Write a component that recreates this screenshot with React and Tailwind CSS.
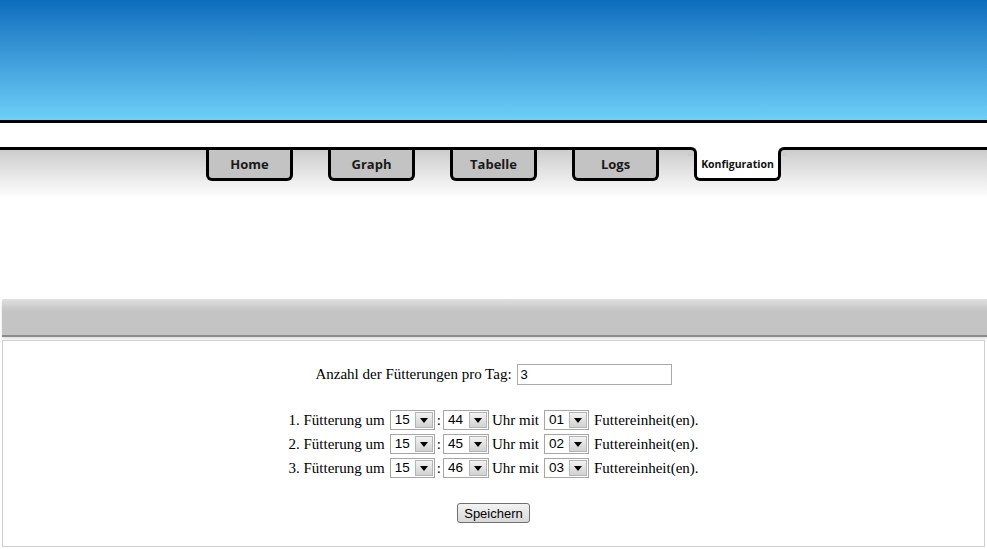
import React from "react";

const tabs = ["Home", "Graph", "Tabelle", "Logs", "Konfiguration"];

function Tab({ label, active }) {
  if (active) {
    return (
      <div className="relative -mt-[3px] flex h-[34px] w-[87px] items-center justify-center rounded-b-[6px] border-x-[3px] border-b-[3px] border-black bg-white pt-[4px]">
        <div className="absolute -left-[9px] top-0 h-[9px] w-[9px] bg-white">
          <div className="h-full w-full rounded-tr-[6px] border-r-[3px] border-t-[3px] border-black bg-[#cdcdcd]" />
        </div>
        <div className="absolute -right-[9px] top-0 h-[9px] w-[9px] bg-white">
          <div className="h-full w-full rounded-tl-[6px] border-l-[3px] border-t-[3px] border-black bg-[#cdcdcd]" />
        </div>
        <span className="text-[10.5px] font-bold text-[#111]" style={{ fontFamily: '"Open Sans", sans-serif' }}>
          {label}
        </span>
      </div>
    );
  }
  return (
    <div className="flex h-[31px] w-[87px] items-center justify-center rounded-b-[6px] border-x-[3px] border-b-[3px] border-black bg-[#c3c3c3] pt-[1px]">
      <span className="text-[13px] font-bold text-[#1a1a1a]" style={{ fontFamily: '"Open Sans", sans-serif' }}>
        {label}
      </span>
    </div>
  );
}

function Select({ value, w }) {
  return (
    <span className={`inline-flex h-[20px] ${w} items-center justify-between border border-[#a6a6a6] bg-white pl-[4px] pr-[1px]`}>
      <span className="text-[13.5px] leading-none text-black" style={{ fontFamily: '"Liberation Sans", Arial, sans-serif' }}>
        {value}
      </span>
      <span className="flex h-[16px] w-[18px] items-center justify-center border border-[#b5b5b5] bg-gradient-to-b from-[#f2f2f2] to-[#d2d2d2]">
        <svg width="8" height="5" viewBox="0 0 8 5">
          <path d="M0 0H8L4 5Z" fill="#000" />
        </svg>
      </span>
    </span>
  );
}

const serif = { fontFamily: '"Liberation Serif", "Times New Roman", serif' };

function Row({ n, h, m, u }) {
  return (
    <div className="flex h-[24px] items-center justify-center text-[15px] leading-[24px] text-black" style={serif}>
      <span className="mr-[5px]">{n}. Fütterung um</span>
      <Select value={h} w="w-[45px]" />
      <span className="mx-[2px]">:</span>
      <Select value={m} w="w-[46px]" />
      <span className="ml-[3px] mr-[5px]">Uhr mit</span>
      <Select value={u} w="w-[45px]" />
      <span className="ml-[5px]">Futtereinheit(en).</span>
    </div>
  );
}

export default function App() {
  return (
    <div className="min-h-[549px] w-[987px] overflow-hidden bg-white">
      <div className="h-[120px] bg-gradient-to-b from-[#0a6dbc] to-[#6dd0f7]" />
      <div className="h-[3px] bg-black" />
      <div className="h-[24px] bg-white" />
      <div className="h-[152px] border-t-[3px] border-black bg-[linear-gradient(#cdcdcd,#ffffff_48px)]">
        <div className="ml-[206px] flex items-start gap-[35px]">
          {tabs.map((t) => (
            <Tab key={t} label={t} active={t === "Konfiguration"} />
          ))}
        </div>
      </div>
      <div className="ml-[2px] h-[38px] rounded-tl-[2px] border-b-[2px] border-[#8b8b8b] bg-[linear-gradient(#e0e0e0,#c4c4c4_12px)] shadow-[0_2px_3px_rgba(0,0,0,0.12)]" />
      <div className="mx-[2px] mt-[3px] h-[207px] border border-[#cfcfcf] bg-white">
        <div className="mt-[23px] flex h-[21px] items-center justify-center text-[15px] text-black" style={serif}>
          <span className="mr-[5px]">Anzahl der Fütterungen pro Tag:</span>
          <span className="flex h-[21px] w-[155px] items-center border border-[#a9a9a9] px-[3px] text-[13px]" style={{ fontFamily: '"Liberation Sans", Arial, sans-serif' }}>
            3
          </span>
        </div>
        <div className="mt-[23px] flex flex-col">
          <Row n={1} h="15" m="44" u="01" />
          <Row n={2} h="15" m="45" u="02" />
          <Row n={3} h="15" m="46" u="03" />
        </div>
        <div className="mt-[23px] flex justify-center">
          <button className="h-[20px] rounded-[3px] border border-[#707070] bg-gradient-to-b from-[#f3f3f3] to-[#d8d8d8] px-[6px] text-[13px] leading-none text-black" style={{ fontFamily: '"Liberation Sans", Arial, sans-serif' }}>
            Speichern
          </button>
        </div>
      </div>
    </div>
  );
}
